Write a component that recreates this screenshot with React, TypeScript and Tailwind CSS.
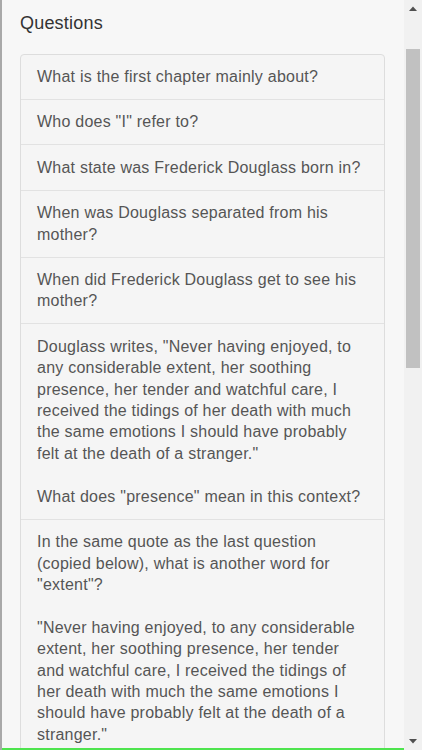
import React from 'react';

const questions: string[] = [
  'What is the first chapter mainly about?',
  'Who does "I" refer to?',
  'What state was Frederick Douglass born in?',
  'When was Douglass separated from his mother?',
  'When did Frederick Douglass get to see his mother?',
  'Douglass writes, "Never having enjoyed, to any considerable extent, her soothing presence, her tender and watchful care, I received the tidings of her death with much the same emotions I should have probably felt at the death of a stranger."\n\nWhat does "presence" mean in this context?',
  'In the same quote as the last question (copied below), what is another word for "extent"?\n\n"Never having enjoyed, to any considerable extent, her soothing presence, her tender and watchful care, I received the tidings of her death with much the same emotions I should have probably felt at the death of a stranger."',
];

function Arrow({ down = false }: { down?: boolean }) {
  return (
    <svg width="8" height="5" viewBox="0 0 8 5" className={down ? 'rotate-180' : ''}>
      <path d="M0 5 L4 0.5 L8 5 Z" fill="#505050" />
    </svg>
  );
}

export default function App() {
  return (
    <div
      className="flex h-[750px] w-[422px] overflow-hidden bg-[#f7f7f7]"
      style={{ fontFamily: '"Liberation Sans", Arial, sans-serif' }}
    >
      {/* page */}
      <div className="flex min-w-0 flex-1 flex-col border-l-2 border-[#a9a9a9]">
        <div className="flex-1 overflow-hidden pl-[18px] pr-[19px] pt-[13px]">
          <h2 className="text-[18px] leading-[20px] tracking-[0.2px] text-[#333]">Questions</h2>
          <ul className="mt-[20.5px] rounded-[4px] border border-[#dddddd] bg-[#f5f5f5]">
            {questions.map((q, i) => (
              <li
                key={i}
                className="whitespace-pre-line border-b border-[#e2e2e2] px-[16px] py-[11.5px] text-[16px] leading-[21.4px] tracking-[0.23px] text-[#555] last:border-b-0"
              >
                {q}
              </li>
            ))}
          </ul>
        </div>
        <div className="h-[2px] bg-[#4ee44e]" />
      </div>

      {/* scrollbar */}
      <div className="flex w-[18px] flex-col bg-[#f1f1f1]">
        <div className="flex h-[17px] items-center justify-center">
          <Arrow />
        </div>
        <div className="mx-[2px] mt-[32px] h-[319px] bg-[#c1c1c1]" />
        <div className="flex-1" />
        <div className="flex h-[17px] items-center justify-center">
          <Arrow down />
        </div>
      </div>
    </div>
  );
}
